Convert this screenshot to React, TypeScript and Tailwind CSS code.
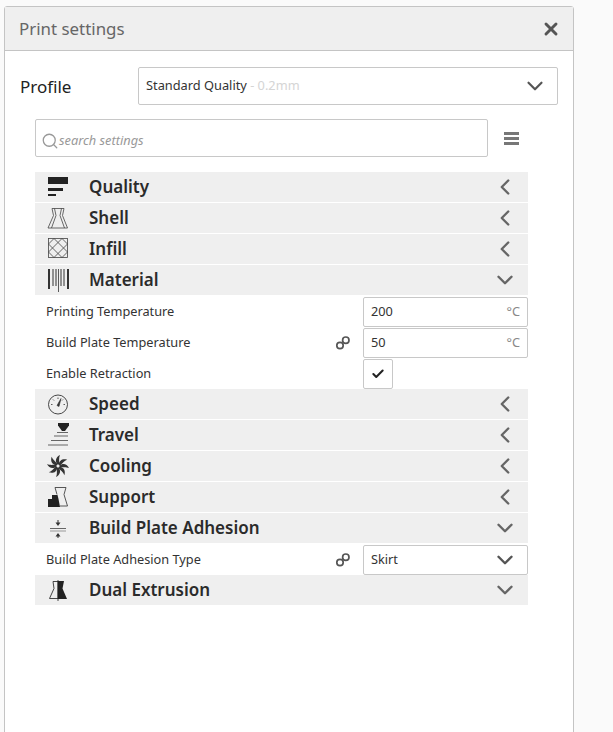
import React from 'react';
import { X, ChevronDown, ChevronLeft, Search, Check } from 'lucide-react';

const QualityIcon = () => (
  <svg width="24" height="24" viewBox="0 0 24 24" fill="#222">
    <rect x="2" y="2" width="20" height="7" />
    <rect x="2" y="13" width="15" height="3" />
    <rect x="2" y="19" width="8" height="2" />
  </svg>
);

const ShellIcon = () => (
  <svg width="24" height="24" viewBox="0 0 24 24" fill="none" stroke="#444" strokeWidth="0.8">
    <path d="M6 2.500h12l-1.500 7 5 12.500H2l5.500-12.500z" />
    <path d="M8.500 2.500l1.500 7-4.500 12.500M15.500 2.500l-1.500 7 4.500 12.500" />
  </svg>
);

const InfillIcon = () => (
  <svg width="24" height="24" viewBox="0 0 24 24" fill="none" stroke="#444" strokeWidth="0.8">
    <rect x="2.500" y="1.500" width="19" height="19" />
    <path d="M2.500 7l5.500-5.500 13.500 13.500-5.500 5.500zM21.500 7l-5.500-5.500L2.500 15l5.500 5.500z" />
  </svg>
);

const MaterialIcon = () => (
  <svg width="24" height="24" viewBox="0 0 24 24" stroke="#333" fill="none">
    <path d="M3 1v20" strokeWidth="2" />
    <path d="M7 1v17M10 1v17" strokeWidth="1" />
    <path d="M12.500 1v23" strokeWidth="0.8" />
    <path d="M15 1v17M18 1v17" strokeWidth="1" />
    <path d="M22 1v20" strokeWidth="2" />
  </svg>
);

const SpeedIcon = () => (
  <svg width="24" height="24" viewBox="0 0 24 24" fill="none" stroke="#333">
    <circle cx="12" cy="12.500" r="9.500" strokeWidth="0.9" />
    <path d="M11 13.500l4-7-2 8z" fill="#333" strokeWidth="0.6" />
    <path d="M5 12.500h1.500M17.500 12.500h1.500M12 5.500v1.500M7 7.500l1 1M17 7.500l-1 1" strokeWidth="0.8" />
  </svg>
);

const TravelIcon = () => (
  <svg width="24" height="24" viewBox="0 0 24 24" fill="#222" stroke="none">
    <path d="M12 0h11v2.500l-4 5.500h-3l-4-5.500z" />
    <rect x="11" y="9" width="11" height="1" fill="#666" />
    <rect x="8" y="12.500" width="14" height="1" fill="#666" />
    <rect x="5" y="17" width="17" height="1" fill="#666" />
    <rect x="2" y="21.500" width="20" height="1" fill="#666" />
  </svg>
);

const CoolingIcon = () => (
  <svg width="24" height="24" viewBox="-12 -12 24 24" fill="#333">
    {[0, 45, 90, 135, 180, 225, 270, 315].map((deg) => (
      <path key={deg} transform={`rotate(${deg})`} d="M-0.500 -1.500C-3.500 -5 -2 -9 2 -11C0.500 -8 1.500 -5 1 -1.500z" />
    ))}
  </svg>
);

const SupportIcon = () => (
  <svg width="24" height="24" viewBox="0 0 24 24">
    <path d="M9 2.500h11l-2 7 3.500 11.500H14M9 2.500l2 7" fill="none" stroke="#444" strokeWidth="0.9" />
    <path d="M2 22v-8h4V10h5.500l1 4 1.500 8z" fill="#222" />
  </svg>
);

const AdhesionIcon = () => (
  <svg width="24" height="24" viewBox="0 0 24 24" fill="#333" stroke="none">
    <rect x="4" y="12" width="16" height="1" fill="#666" />
    <rect x="4" y="14.500" width="16" height="1" fill="#999" />
    <rect x="11.500" y="4" width="1" height="4" />
    <path d="M9.500 6.500h5L12 10z" />
    <rect x="11.500" y="18" width="1" height="4" />
    <path d="M9.500 20.500h5L12 17z" />
  </svg>
);

const DualIcon = () => (
  <svg width="24" height="24" viewBox="0 0 24 24">
    <path d="M7 3.500h5v17H3.500l4.500-10z" fill="none" stroke="#333" strokeWidth="0.9" />
    <path d="M12 3h6l-1.500 7.500 4.500 10.500h-9z" fill="#222" />
    <path d="M12 2v21" stroke="#222" strokeWidth="0.8" />
  </svg>
);

const LinkIcon = () => (
  <svg className="mr-[12px]" width="16" height="16" viewBox="0 0 16 16" fill="none" stroke="#555" strokeWidth="1.7">
    <circle cx="5" cy="10.500" r="3.200" />
    <circle cx="10.800" cy="5.200" r="3.200" />
  </svg>
);

function SectionRow({ icon, label, open }: { icon: React.ReactNode; label: string; open?: boolean }) {
  return (
    <div className="mb-px flex h-[30px] items-center bg-[#efefef] pl-[11px] pr-[10px]">
      <div className="flex w-[43px] shrink-0">{icon}</div>
      <span className="flex-1 text-[17px] font-semibold text-[#2b2b2b]">{label}</span>
      {open ? (
        <ChevronDown className="h-[26px] w-[26px] text-[#666]" strokeWidth={2.2} />
      ) : (
        <ChevronLeft className="h-[26px] w-[26px] text-[#666]" strokeWidth={2.2} />
      )}
    </div>
  );
}

function SettingRow({ label, linked, children }: { label: string; linked?: boolean; children: React.ReactNode }) {
  return (
    <div className="flex h-[31px] items-center pl-[11px]">
      <span className="flex-1 text-[12.750px] text-[#333]">{label}</span>
      {linked && <LinkIcon />}
      <div className="w-[165px]">{children}</div>
    </div>
  );
}

export default function App() {
  return (
    <div className="min-h-screen overflow-hidden bg-[#fafafa] pl-[4px] pt-[6px] font-['Noto_Sans',sans-serif]">
      <div className="h-[760px] w-[570px] rounded-t-[3px] border border-[#c4c4c4] bg-white">
        <header className="flex h-[44px] items-center justify-between border-b border-[#c4c4c4] bg-[#efefef] pl-[14px] pr-[12px]">
          <h1 className="text-[16.900px] text-[#666]">Print settings</h1>
          <X className="h-[20px] w-[20px] text-[#555]" strokeWidth={3.5} />
        </header>

        <div className="mt-[16px] flex items-center px-[15px]">
          <span className="w-[118px] pt-[2px] text-[17px] text-[#222]">Profile</span>
          <div className="flex h-[38px] flex-1 items-center justify-between rounded-[2px] border border-[#c8c8c8] pl-[7px] pr-[9px]">
            <span className="text-[12.800px] text-[#333]">
              Standard Quality <span className="text-[#d5d5d5]">- 0.2mm</span>
            </span>
            <ChevronDown className="h-[26px] w-[26px] text-[#555]" strokeWidth={2} />
          </div>
        </div>

        <div className="ml-[30px] mt-[14px] flex items-center">
          <div className="flex h-[38px] w-[453px] items-center rounded-[2px] border border-[#c8c8c8] pl-[5px] pt-[5px]">
            <Search className="h-[18px] w-[18px] text-[#999]" strokeWidth={1.7} />
            <span className="text-[12.800px] italic text-[#999]">search settings</span>
          </div>
          <div className="ml-[16px] flex flex-col gap-[2px]">
            <div className="h-[3px] w-[15px] bg-[#777]" />
            <div className="h-[3px] w-[15px] bg-[#777]" />
            <div className="h-[3px] w-[15px] bg-[#777]" />
          </div>
        </div>

        <div className="ml-[30px] mt-[15px] w-[493px]">
          <SectionRow icon={<QualityIcon />} label="Quality" />
          <SectionRow icon={<ShellIcon />} label="Shell" />
          <SectionRow icon={<InfillIcon />} label="Infill" />
          <SectionRow icon={<MaterialIcon />} label="Material" open />
          <SettingRow label="Printing Temperature">
            <div className="flex h-[30px] items-center justify-between rounded-[2px] border border-[#c8c8c8] px-[7px] text-[12.750px] text-[#333]">
              <span>200</span>
              <span className="text-[#888]">°C</span>
            </div>
          </SettingRow>
          <SettingRow label="Build Plate Temperature" linked>
            <div className="flex h-[30px] items-center justify-between rounded-[2px] border border-[#c8c8c8] px-[7px] text-[12.750px] text-[#333]">
              <span>50</span>
              <span className="text-[#888]">°C</span>
            </div>
          </SettingRow>
          <SettingRow label="Enable Retraction">
            <div className="flex h-[30px] w-[30px] items-center justify-center rounded-[2px] border border-[#c8c8c8]">
              <Check className="h-[14px] w-[14px] text-[#222]" strokeWidth={3.5} />
            </div>
          </SettingRow>
          <SectionRow icon={<SpeedIcon />} label="Speed" />
          <SectionRow icon={<TravelIcon />} label="Travel" />
          <SectionRow icon={<CoolingIcon />} label="Cooling" />
          <SectionRow icon={<SupportIcon />} label="Support" />
          <SectionRow icon={<AdhesionIcon />} label="Build Plate Adhesion" open />
          <SettingRow label="Build Plate Adhesion Type" linked>
            <div className="flex h-[30px] items-center justify-between rounded-[2px] border border-[#c8c8c8] pl-[7px] pr-[9px] text-[12.750px] text-[#333]">
              <span>Skirt</span>
              <ChevronDown className="h-[26px] w-[26px] text-[#555]" strokeWidth={2.2} />
            </div>
          </SettingRow>
          <SectionRow icon={<DualIcon />} label="Dual Extrusion" open />
        </div>
      </div>
    </div>
  );
}
